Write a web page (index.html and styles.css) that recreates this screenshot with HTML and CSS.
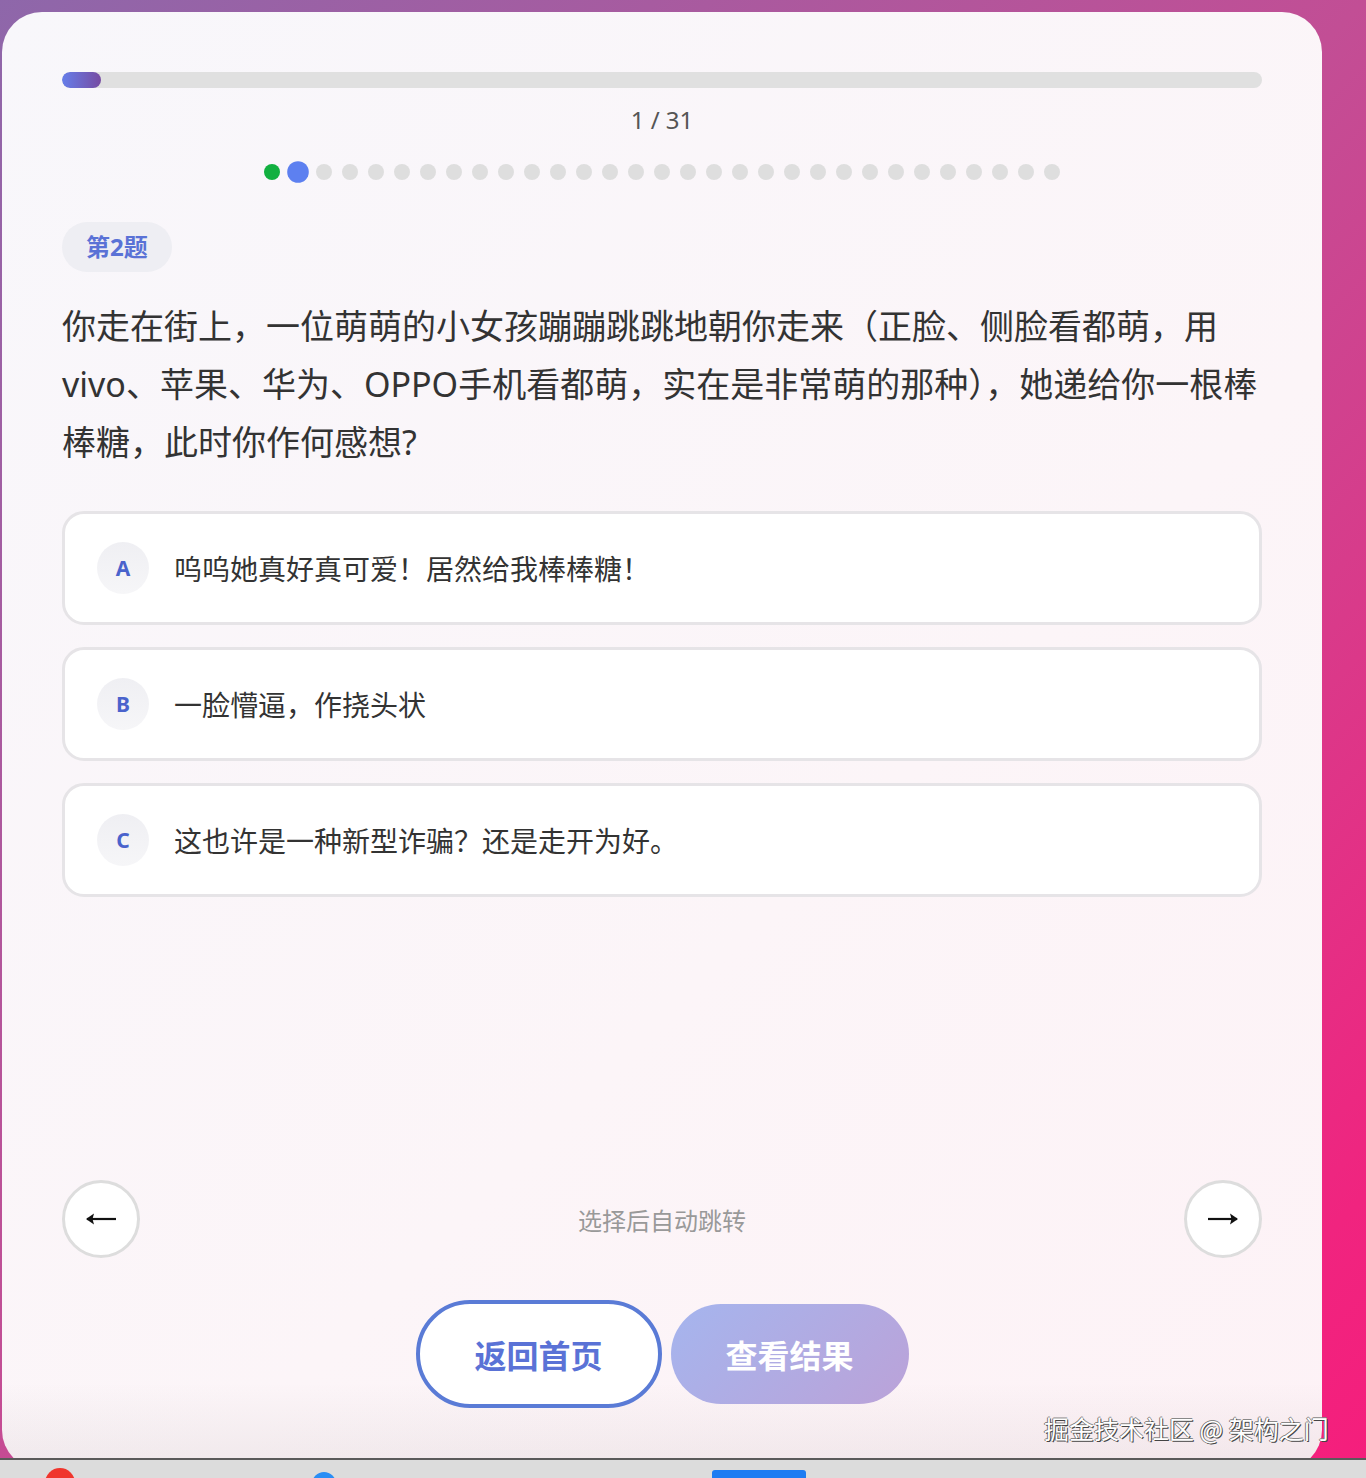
FILE: index.html
```html
<!DOCTYPE html>
<html lang="zh-CN">
<head>
  <meta charset="UTF-8" />
  <title>答题</title>
  <link rel="stylesheet" href="styles.css">
</head>
<body>

  <div class="quiz-card">
    <div class="progress">
      <div class="progress-fill" style="width: 3.23%"></div>
    </div>
    <div class="progress-text">1 / 31</div>

    <div class="dots">
      <span class="dot done"></span>
      <span class="dot active"></span>
      <span class="dot"></span><span class="dot"></span><span class="dot"></span><span class="dot"></span>
      <span class="dot"></span><span class="dot"></span><span class="dot"></span><span class="dot"></span>
      <span class="dot"></span><span class="dot"></span><span class="dot"></span><span class="dot"></span>
      <span class="dot"></span><span class="dot"></span><span class="dot"></span><span class="dot"></span>
      <span class="dot"></span><span class="dot"></span><span class="dot"></span><span class="dot"></span>
      <span class="dot"></span><span class="dot"></span><span class="dot"></span><span class="dot"></span>
      <span class="dot"></span><span class="dot"></span><span class="dot"></span><span class="dot"></span>
      <span class="dot"></span>
    </div>

    <div class="q-badge">第2题</div>
    <p class="question">你走在街上，一位萌萌的小女孩蹦蹦跳跳地朝你走来（正脸、侧脸看都萌，用vivo、苹果、华为、OPPO手机看都萌，实在是非常萌的那种），她递给你一根棒棒糖，此时你作何感想?</p>

    <div class="options">
      <div class="option">
        <span class="opt-letter">A</span>
        <span class="opt-text">呜呜她真好真可爱！居然给我棒棒糖！</span>
      </div>
      <div class="option">
        <span class="opt-letter">B</span>
        <span class="opt-text">一脸懵逼，作挠头状</span>
      </div>
      <div class="option">
        <span class="opt-letter">C</span>
        <span class="opt-text">这也许是一种新型诈骗？还是走开为好。</span>
      </div>
    </div>

    <div class="nav">
      <button class="nav-btn">
        <svg width="32" height="14" viewBox="0 0 32 14"><path d="M2 7 H31" stroke="#111" stroke-width="2.2" fill="none"/><path d="M1 7 L9 1.5 L7.5 7 L9 12.5 Z" fill="#111"/></svg>
      </button>
      <span class="nav-hint">选择后自动跳转</span>
      <button class="nav-btn">
        <svg width="32" height="14" viewBox="0 0 32 14"><path d="M1 7 H30" stroke="#111" stroke-width="2.2" fill="none"/><path d="M31 7 L23 1.5 L24.5 7 L23 12.5 Z" fill="#111"/></svg>
      </button>
    </div>

    <div class="actions">
      <button class="btn-home">返回首页</button>
      <button class="btn-result" disabled>查看结果</button>
    </div>
  </div>

  <div class="watermark">掘金技术社区 @ 架构之门</div>

  <div class="dock">
    <span class="dock-red"></span>
    <span class="dock-blue"></span>
    <span class="dock-bar"></span>
  </div>

</body>
</html>
```

FILE: styles.css
```css
* {
  box-sizing: border-box;
}

html, body {
  margin: 0;
  height: 100%;
}

body {
  font-family: "Noto Sans", "Noto Sans CJK SC", sans-serif;
  color: #333;
  padding: 12px 44px 0 2px;
  background: linear-gradient(135deg, #8e67aa 0%, #c24e95 48%, #d73c8b 67%, #f0247f 90%, #f51e7c 100%);
  overflow: hidden;
}

.quiz-card {
  height: 1458px;
  display: flex;
  flex-direction: column;
  padding: 60px 60px 62px;
  border-radius: 40px;
  background:
    linear-gradient(to bottom, rgba(0,0,0,0) 94%, rgba(80,60,60,0.07) 100%),
    linear-gradient(135deg, #f8f7fb 0%, #fcf5f8 60%, #fdf2f6 100%);
}

.progress {
  height: 16px;
  border-radius: 8px;
  background: #e0e0e0;
  overflow: hidden;
}

.progress-fill {
  height: 100%;
  border-radius: 8px;
  background: linear-gradient(90deg, #667eea, #764ba2);
}

.progress-text {
  margin-top: 16px;
  text-align: center;
  font-size: 24px;
  line-height: 32px;
  color: #555;
}

.dots {
  display: flex;
  justify-content: center;
  gap: 10px;
  margin-top: 28px;
}

.dot {
  width: 16px;
  height: 16px;
  border-radius: 50%;
  background: #dedede;
}

.dot.done {
  background: #12b040;
}

.dot.active {
  background: #5d80f0;
  transform: scale(1.35);
}

.q-badge {
  align-self: flex-start;
  margin-top: 42px;
  height: 50px;
  padding: 0 24px;
  border-radius: 25px;
  background: #eeeef3;
  color: #5a72d6;
  font-weight: 700;
  font-size: 24px;
  line-height: 50px;
}

.question {
  margin: 25px 0 0;
  font-size: 34px;
  line-height: 58px;
  color: #333;
}

.options {
  display: flex;
  flex-direction: column;
  gap: 22px;
  margin-top: 40px;
}

.option {
  display: flex;
  align-items: center;
  gap: 25px;
  height: 114px;
  padding: 0 32px;
  background: #fff;
  border: 3px solid #e6e4e7;
  border-radius: 22px;
}

.opt-letter {
  width: 52px;
  height: 52px;
  border-radius: 50%;
  background: linear-gradient(180deg, #efeff3, #f6f6f8);
  color: #4a63cc;
  font-weight: 700;
  font-size: 21px;
  line-height: 52px;
  text-align: center;
}

.opt-text {
  font-size: 28px;
  color: #333;
}

.nav {
  margin-top: auto;
  display: flex;
  align-items: center;
  justify-content: space-between;
}

.nav-btn {
  width: 78px;
  height: 78px;
  border-radius: 50%;
  border: 3px solid #dddddd;
  background: #fff;
  padding: 0;
  display: flex;
  align-items: center;
  justify-content: center;
}

.nav-hint {
  font-size: 24px;
  color: #999;
}

.actions {
  display: flex;
  justify-content: center;
  align-items: center;
  gap: 9px;
  margin-top: 42px;
}

.actions button {
  width: 238px;
  height: 100px;
  border-radius: 54px;
  font-family: "Noto Sans", "Noto Sans CJK SC", sans-serif;
  font-size: 32px;
  font-weight: 700;
}

.btn-home {
  width: 246px !important;
  height: 108px !important;
  border: 4px solid #5a7bd6;
  background: #fff;
  color: #5a72d6;
}

.btn-result {
  border: none;
  color: #fff;
  background: linear-gradient(135deg, #a5b5ee, #bba2d8);
}

.watermark {
  position: absolute;
  left: 1044px;
  top: 1410px;
  font-family: "Noto Sans CJK SC", sans-serif;
  font-size: 25px;
  color: #fff;
  text-shadow: 1px 1px 0 #444, -1px 0 0 #777, 0 -1px 0 #888;
}

.dock {
  position: fixed;
  left: 0;
  right: 0;
  bottom: 0;
  height: 20px;
  background: #dcdcdc;
  border-top: 2px solid #5a5a5a;
  overflow: hidden;
}

.dock-red {
  position: absolute;
  left: 45px;
  top: 8px;
  width: 30px;
  height: 30px;
  border-radius: 50%;
  background: #f0352c;
}

.dock-blue {
  position: absolute;
  left: 312px;
  top: 12px;
  width: 24px;
  height: 24px;
  border-radius: 50%;
  background: #2a8ef5;
}

.dock-bar {
  position: absolute;
  left: 712px;
  top: 10px;
  width: 94px;
  height: 12px;
  border-radius: 3px;
  background: #1e7cf2;
}
```
